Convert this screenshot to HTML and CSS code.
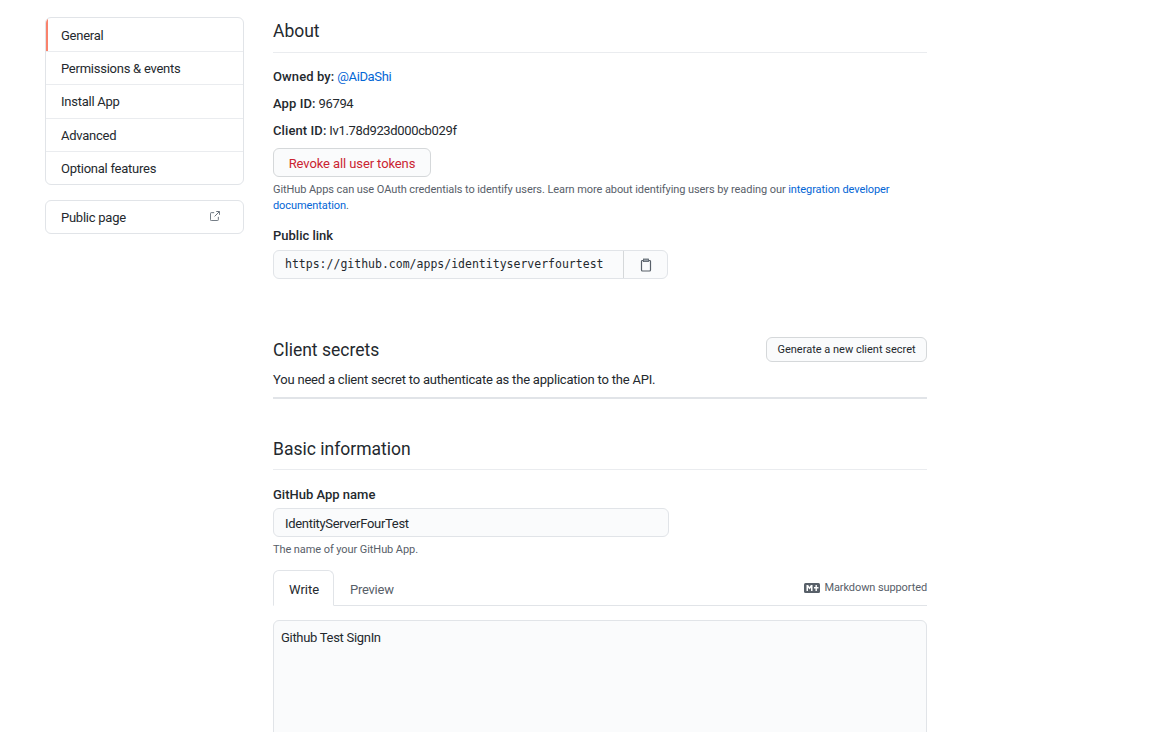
FILE: index.html
```html
<!DOCTYPE html>
<html lang="en">
<head>
<meta charset="utf-8">
<title>GitHub App settings</title>
<link rel="stylesheet" href="styles.css">
</head>
<body>
<div class="layout">
  <aside class="sidebar">
    <nav class="menu">
      <a class="menu-item selected">General</a>
      <a class="menu-item">Permissions &amp; events</a>
      <a class="menu-item">Install App</a>
      <a class="menu-item">Advanced</a>
      <a class="menu-item">Optional features</a>
    </nav>
    <nav class="menu public">
      <a class="menu-item public-item">Public page
        <svg class="ext" width="10" height="10" viewBox="0 0 12 12"><path fill="none" stroke="#6a737d" stroke-width="1.200" d="M5 2H1.500a1 1 0 0 0-1 1v7.500a1 1 0 0 0 1 1H9a1 1 0 0 0 1-1V7M5.500 6.500 11 1M7.500 .6h4v4"/></svg>
      </a>
    </nav>
  </aside>
  <main class="content">
    <h2 class="head about-head">About</h2>
    <p class="meta first"><b>Owned by:</b> <a class="link">@AiDaShi</a></p>
    <p class="meta"><b>App ID:</b> 96794</p>
    <p class="meta"><b>Client ID:</b> Iv1.78d923d000cb029f</p>
    <button class="btn danger">Revoke all user tokens</button>
    <p class="note oauth">GitHub Apps can use OAuth credentials to identify users. Learn more about identifying users by reading our <a class="link">integration developer documentation</a>.</p>
    <label class="label public-label">Public link</label>
    <div class="copy">
      <span class="copy-url">https://github.com/apps/identityserverfourtest</span>
      <span class="copy-btn">
        <svg width="12" height="14" viewBox="0 0 12 14"><path fill="none" stroke="#586069" stroke-width="1.200" d="M3.500 2.500H2.500a1 1 0 0 0-1 1v8.500a1 1 0 0 0 1 1h7a1 1 0 0 0 1-1V3.500a1 1 0 0 0-1-1h-1"/><rect x="3.500" y="1" width="5" height="2.600" fill="#959da5" stroke="#586069" stroke-width=".8"/></svg>
      </span>
    </div>
    <div class="secrets">
      <div class="secrets-row">
        <h2 class="secrets-title">Client secrets</h2>
        <button class="btn small">Generate a new client secret</button>
      </div>
      <p class="secrets-text">You need a client secret to authenticate as the application to the API.</p>
    </div>
    <h2 class="head basic-head">Basic information</h2>
    <label class="label name-label">GitHub App name</label>
    <input class="input" type="text" value="IdentityServerFourTest">
    <p class="note name-note">The name of your GitHub App.</p>
    <div class="tabs">
      <span class="tab active">Write</span>
      <span class="tab">Preview</span>
      <span class="md">
        <svg width="16" height="10" viewBox="0 0 16 10"><rect width="16" height="10" rx="1.500" fill="#586069"/><path fill="#fff" d="M2.500 8V2h1.600l1.400 2 1.400-2h1.600v6H7V4.500L5.500 6.500 4 4.500V8H2.500zM11.500 2h1.400v2H14.500v1.400H12.900v2.600h-1.400V5.400H10V4h1.500V2z"/></svg>
        Markdown supported
      </span>
    </div>
    <textarea class="area">Github Test SignIn</textarea>
  </main>
</div>
</body>
</html>
```
FILE: styles.css
```css
* { box-sizing: border-box; }
html, body { margin: 0; height: 732px; overflow: hidden; background: #fff; }
body { font-family: Roboto, "Open Sans", sans-serif; font-size: 13px; letter-spacing: -0.25px; color: #24292e; line-height: 1.5; }
.layout { display: flex; align-items: flex-start; padding: 17px 0 0 45px; gap: 29px; }
.sidebar { width: 199px; flex: none; }
.menu { border: 1px solid #e1e4e8; border-radius: 6px; overflow: hidden; background: #fff; }
.menu-item { display: block; height: 33.500px; padding: 0 15px; line-height: 34px; border-bottom: 1px solid #eaecef; position: relative; }
.menu-item:last-child { border-bottom: 0; height: 32px; }
.menu-item.selected { line-height: 36px; }
.menu-item.selected::before { content: ""; position: absolute; left: 0; top: 0; bottom: 0; width: 2px; background: #f9826c; }
.public { margin-top: 15px; }
.public .public-item { height: 32px; display: flex; justify-content: space-between; align-items: center; padding: 2px 23px 0 15px; line-height: 20px; }
.ext { flex: none; margin-top: -4px; }
.content { width: 654px; flex: none; }
.head { margin: 0; font-size: 17.500px; font-weight: 400; line-height: 26px; letter-spacing: 0; border-bottom: 1px solid #eaecef; }
.about-head { padding: 1px 0 8px; }
.link { color: #0366d6; }
.meta { margin: 0; line-height: 20px; height: 27px; letter-spacing: -0.350px; }
.meta.first { margin-top: 14px; }
.meta b { font-weight: 500; letter-spacing: 0.100px; }
.btn { display: block; font-family: inherit; border: 1px solid #d5d8da; border-radius: 6px; background: #fafbfc; }
.danger { margin-top: 0; width: 158px; height: 29px; font-size: 13px; letter-spacing: -0.100px; color: #cb2431; padding: 1px 0 0; }
.note { margin: 0; font-size: 11px; line-height: 16px; letter-spacing: -0.080px; color: #586069; }
.oauth { margin-top: 5px; }
.label { display: block; font-weight: 500; letter-spacing: 0; }
.public-label { margin-top: 12px; line-height: 20px; }
.copy { margin-top: 4px; width: 395px; height: 29px; display: flex; border: 1px solid #e1e4e8; border-radius: 6px; background: #fafbfc; overflow: hidden; }
.copy-url { flex: 1; padding-left: 11px; font-family: "DejaVu Sans Mono", monospace; font-size: 11.500px; letter-spacing: 0; line-height: 27px; color: #24292e; }
.copy-btn { width: 44px; border-left: 1px solid #d5d8da; display: flex; align-items: center; justify-content: center; }
.secrets { margin-top: 57px; border-bottom: 2px solid #e1e4e8; padding-bottom: 7px; }
.secrets-row { display: flex; justify-content: space-between; align-items: center; height: 26px; }
.secrets-title { margin: 0; padding-top: 2px; font-size: 17.500px; font-weight: 400; letter-spacing: 0; line-height: 26px; }
.small { font-size: 11px; letter-spacing: 0; height: 25px; width: 161px; padding: 1px 0 0; color: #24292e; }
.secrets-text { margin: 8px 0 0; line-height: 20px; letter-spacing: -0.200px; }
.basic-head { margin-top: 36px; padding: 1px 0 7px; }
.name-label { margin-top: 15px; line-height: 20px; }
.input { display: block; margin-top: 3px; width: 396px; height: 29px; padding: 2px 11px 0; font: inherit; letter-spacing: -0.300px; color: #24292e; background: #fafbfc; border: 1px solid #e1e4e8; border-radius: 6px; }
.name-note { margin-top: 5px; }
.tabs { margin-top: 12px; height: 36px; display: flex; align-items: flex-end; border-bottom: 1px solid #e1e4e8; position: relative; }
.tab { height: 35px; padding: 0 0 0 16px; line-height: 39px; color: #586069; }
.tab.active { width: 61px; height: 36px; margin-bottom: -1px; padding: 0 15px; line-height: 37px; letter-spacing: 0; color: #24292e; background: #fff; border: 1px solid #e1e4e8; border-bottom-color: #fff; border-radius: 6px 6px 0 0; }
.md { position: absolute; right: 0; top: 8px; font-size: 11px; letter-spacing: -0.100px; line-height: 20px; color: #586069; display: flex; align-items: center; gap: 4px; }
.area { display: block; margin-top: 14px; width: 654px; height: 200px; padding: 7px; font: inherit; letter-spacing: -0.300px; line-height: 20px; color: #24292e; background: #fafbfc; border: 1px solid #e1e4e8; border-radius: 6px; resize: none; }
```
